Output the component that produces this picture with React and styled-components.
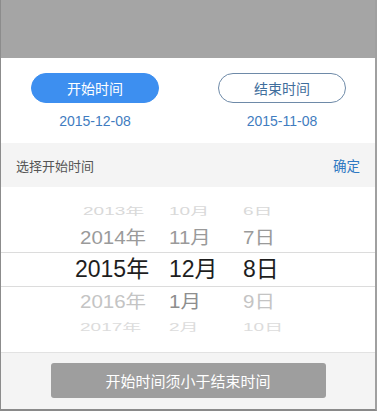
import React from "react"
import styled, { createGlobalStyle } from "styled-components"

const GlobalStyle = createGlobalStyle`
  html, body {
    margin: 0;
    padding: 0;
    background: #fff;
  }
  body {
    font-family: "Liberation Sans", "Noto Sans CJK SC", sans-serif;
  }
`

const Frame = styled.div`
  width: 377px;
  height: 411px;
  box-sizing: border-box;
  display: flex;
  flex-direction: column;
  overflow: hidden;
  border-left: 1px solid #8c8c8c;
  border-right: 2px solid #a0a0a0;
  border-bottom: 2px solid #8a8a8a;
`

const Overlay = styled.div`
  height: 58px;
  flex: none;
  background: #a5a5a5;
`

const TabsRow = styled.div`
  display: flex;
  justify-content: space-between;
  padding: 15px 29px 13px 30px;
  background: #fff;
`

const TabColumn = styled.div`
  width: 128px;
  display: flex;
  flex-direction: column;
  align-items: center;
`

const TabButton = styled.button`
  width: 100%;
  height: 30px;
  box-sizing: border-box;
  border-radius: 15px;
  border: 1px solid ${p => (p.active ? "#3d8ff0" : "#6e8aa8")};
  background: ${p => (p.active ? "#3d8ff0" : "#fff")};
  color: ${p => (p.active ? "#fff" : "#3f6e9c")};
  font-family: "Noto Sans CJK SC", sans-serif;
  font-size: 14px;
  padding: 0;
  cursor: pointer;
`

const DateText = styled.div`
  margin-top: 9px;
  line-height: 18px;
  font-size: 14px;
  color: #3f7cc0;
`

const PickerHeader = styled.div`
  height: 44px;
  flex: none;
  display: flex;
  align-items: center;
  justify-content: space-between;
  padding: 0 15px 0 15px;
  background: #f4f4f4;
  font-family: "Noto Sans CJK SC", sans-serif;
`

const HeaderTitle = styled.span`
  font-size: 13px;
  color: #555;
`

const Confirm = styled.span`
  font-size: 13.5px;
  color: #2f79c2;
`

const Picker = styled.div`
  height: 165px;
  flex: none;
  box-sizing: border-box;
  padding-top: 11px;
  background: #fff;
  display: flex;
  flex-direction: column;
`

// one entry per wheel position: row height, font, colour, squash, left edge
const styles = {
  far: { h: 26, size: 19, color: "#d9d9d9", scale: 0.55, pad: 82 },
  near: { h: 28, size: 20.5, color: "#9a9a9a", scale: 0.88, pad: 79 },
  selected: { h: 35, size: 23, color: "#1e1e1e", scale: 1, pad: 74 },
  nearBelow: { h: 30, size: 20.5, color: "#c4c4c4", scale: 0.88, pad: 79 },
  farBelow: { h: 20, size: 19, color: "#dcdcdc", scale: 0.55, pad: 79 },
}

const PickerRow = styled.div`
  display: grid;
  grid-template-columns: ${p => 168 - styles[p.level].pad}px 74px auto;
  align-items: center;
  padding-left: ${p => styles[p.level].pad}px;
  height: ${p => styles[p.level].h}px;
  box-sizing: border-box;
  font-size: ${p => styles[p.level].size}px;
  color: ${p => styles[p.level].color};
  border-top: ${p => (p.level === "selected" ? "1px solid #dcdcdc" : "none")};
  border-bottom: ${p => (p.level === "selected" ? "1px solid #dcdcdc" : "none")};
  font-family: "Liberation Sans", "Noto Sans CJK SC", sans-serif;
`

const Cell = styled.span`
  display: block;
  line-height: 1;
  white-space: nowrap;
  transform: scaleY(${p => p.scale});
  color: ${p => p.tone || "inherit"};
`

const Footer = styled.div`
  flex: 1;
  display: flex;
  justify-content: center;
  align-items: flex-start;
  padding-top: 10px;
  background: #f4f4f4;
  border-top: 1px solid #e2e2e2;
`

const SubmitButton = styled.button`
  width: 275px;
  height: 35px;
  border: none;
  border-radius: 3px;
  background: #9e9e9e;
  color: #fff;
  font-family: "Noto Sans CJK SC", sans-serif;
  font-size: 15px;
  padding: 0;
`

const rows = [
  { level: "far", cells: ["2013年", "10月", "6日"] },
  { level: "near", cells: ["2014年", "11月", "7日"] },
  { level: "selected", cells: ["2015年", "12月", "8日"] },
  { level: "nearBelow", cells: ["2016年", "1月", "9日"], tones: [null, "#8e8e8e", null] },
  { level: "farBelow", cells: ["2017年", "2月", "10日"] },
]

const App = () => {
  return (
    <>
      <GlobalStyle />
      <Frame>
        <Overlay />
        <TabsRow>
          <TabColumn>
            <TabButton active>开始时间</TabButton>
            <DateText>2015-12-08</DateText>
          </TabColumn>
          <TabColumn>
            <TabButton>结束时间</TabButton>
            <DateText>2015-11-08</DateText>
          </TabColumn>
        </TabsRow>
        <PickerHeader>
          <HeaderTitle>选择开始时间</HeaderTitle>
          <Confirm>确定</Confirm>
        </PickerHeader>
        <Picker>
          {rows.map(row => (
            <PickerRow key={row.cells[0]} level={row.level}>
              {row.cells.map((c, i) => (
                <Cell
                  key={c}
                  scale={styles[row.level].scale}
                  tone={row.tones ? row.tones[i] : null}
                >
                  {c}
                </Cell>
              ))}
            </PickerRow>
          ))}
        </Picker>
        <Footer>
          <SubmitButton>开始时间须小于结束时间</SubmitButton>
        </Footer>
      </Frame>
    </>
  )
}

export default App
